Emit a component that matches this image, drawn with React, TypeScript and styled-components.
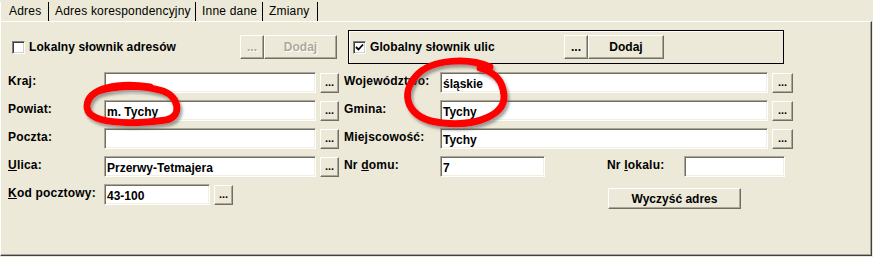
import React from "react";
import styled, { createGlobalStyle } from "styled-components";

const Global = createGlobalStyle`
  html, body {
    margin: 0;
    padding: 0;
    background: #ece9d8;
  }
  body {
    font-family: "Liberation Sans", Arial, sans-serif;
    font-size: 12px;
    color: #000;
  }
`;

const Screen = styled.div`
  position: relative;
  width: 873px;
  height: 257px;
  overflow: hidden;
  background: #ece9d8;
`;

const TabBar = styled.div`
  display: flex;
  height: 21px;
`;

const Tab = styled.div<{ $w: number; $active?: boolean }>`
  width: ${(p) => p.$w}px;
  box-sizing: border-box;
  height: 21px;
  padding: 4px 0 0 ${(p) => (p.$active ? 8 : 6)}px;
  border-right: 1px solid #000;
  border-left: ${(p) => (p.$active ? "1px solid #fff" : "none")};
  font-size: 12px;
  letter-spacing: 0.2px;
  line-height: 14px;
  white-space: nowrap;
  clip-path: inset(2px 0 0 0);
`;

const Panel = styled.div`
  width: 872px;
  height: 235px;
  box-sizing: border-box;
  border-top: 1px solid #fff;
  border-left: 1px solid #fff;
  border-right: 1px solid #404040;
  border-bottom: 1px solid #404040;
  box-shadow: inset -1px -1px 0 #aca899;
`;

const TopRow = styled.div`
  display: flex;
  align-items: center;
  height: 34px;
  margin-top: 8px;
  padding-left: 11px;
`;

const CheckLabel = styled.label`
  display: flex;
  align-items: center;
  gap: 4px;
  font-weight: bold;
  font-size: 12px;
  letter-spacing: 0.1px;
`;

const LocalBlock = styled.div`
  display: flex;
  align-items: center;
  width: 228px;
`;

const Box = styled.span`
  width: 13px;
  height: 13px;
  box-sizing: border-box;
  background: #fff;
  border-top: 1px solid #808080;
  border-left: 1px solid #808080;
  border-right: 1px solid #fff;
  border-bottom: 1px solid #fff;
  box-shadow: inset 1px 1px 0 #404040, inset -1px -1px 0 #d4d0c8;
  display: flex;
  align-items: center;
  justify-content: center;
`;

const Button = styled.button<{ $w: number; $h?: number; $disabled?: boolean }>`
  width: ${(p) => p.$w}px;
  height: ${(p) => p.$h ?? 24}px;
  box-sizing: border-box;
  padding: 0;
  margin: 0;
  background: #ece9d8;
  border-top: 1px solid #fff;
  border-left: 1px solid #fff;
  border-right: 1px solid #716f64;
  border-bottom: 1px solid #716f64;
  box-shadow: inset -1px -1px 0 #aca899;
  font-family: "Liberation Sans", Arial, sans-serif;
  font-weight: bold;
  font-size: 12px;
  color: ${(p) => (p.$disabled ? "#aca899" : "#000")};
  text-shadow: ${(p) => (p.$disabled ? "1px 1px 0 #fff" : "none")};
  line-height: 1;
`;

const GroupBox = styled.div`
  display: flex;
  align-items: center;
  width: 436px;
  height: 34px;
  box-sizing: border-box;
  margin-left: 11px;
  border: 1px solid #000;
  box-shadow: inset 1px 1px 0 #fff;
  padding-left: 4px;
`;

const GroupLabel = styled(CheckLabel)`
  width: 211px;
`;

const Rows = styled.div`
  display: flex;
  flex-direction: column;
  gap: 7px;
  margin-top: 8px;
  padding-left: 7px;
`;

const Row = styled.div`
  display: flex;
  align-items: flex-start;
  height: 21px;
`;

const Label = styled.div<{ $w: number }>`
  width: ${(p) => p.$w}px;
  flex: none;
  padding-top: 2px;
  font-weight: bold;
  font-size: 12px;
  letter-spacing: 0.2px;
  white-space: nowrap;
  overflow: hidden;
  u {
    text-decoration: underline;
    text-underline-offset: 1px;
  }
`;

const Input = styled.div<{ $w: number }>`
  width: ${(p) => p.$w}px;
  height: 21px;
  flex: none;
  box-sizing: border-box;
  background: #fff;
  border-top: 1px solid #aca899;
  border-left: 1px solid #aca899;
  border-right: 1px solid #fff;
  border-bottom: 1px solid #fff;
  box-shadow: inset 1px 1px 0 #716f64, inset -1px -1px 0 #f1efe2;
  padding: 4px 0 0 2px;
  font-weight: bold;
  font-size: 12px;
  line-height: 14px;
  white-space: nowrap;
`;

const Dots = styled(Button)`
  margin-left: 4px;
  margin-top: 1px;
  font-size: 11px;
  padding-bottom: 2px;
  flex: none;
`;

const Spacer = styled.div<{ $w: number }>`
  width: ${(p) => p.$w}px;
  flex: none;
`;

const ClearButton = styled(Button)`
  margin-top: 4px;
  flex: none;
`;

const Overlay = styled.svg`
  position: absolute;
  left: 0;
  top: 0;
  pointer-events: none;
`;

const Check = () => (
  <svg width="9" height="9" viewBox="0 0 9 9">
    <path d="M1 4 L3.5 6.5 L8 1.5" stroke="#000" strokeWidth="1.8" fill="none" />
  </svg>
);

const dots = "...";

export default function App() {
  return (
    <Screen>
      <Global />
      <TabBar>
        <Tab $w={49} $active>Adres</Tab>
        <Tab $w={147}>Adres korespondencyjny</Tab>
        <Tab $w={67}>Inne dane</Tab>
        <Tab $w={55}>Zmiany</Tab>
      </TabBar>
      <Panel>
        <TopRow>
          <LocalBlock>
            <CheckLabel>
              <Box />
              Lokalny słownik adresów
            </CheckLabel>
          </LocalBlock>
          <Button $w={24} $disabled>{dots}</Button>
          <Button $w={73} $disabled>Dodaj</Button>
          <GroupBox>
            <GroupLabel>
              <Box><Check /></Box>
              Globalny słownik ulic
            </GroupLabel>
            <Button $w={24}>{dots}</Button>
            <Button $w={76}>Dodaj</Button>
          </GroupBox>
        </TopRow>
        <Rows>
          <Row>
            <Label $w={96}>Kraj:</Label>
            <Input $w={212} />
            <Dots $w={19} $h={20}>{dots}</Dots>
            <Spacer $w={5} />
            <Label $w={96}>Województwo:</Label>
            <Input $w={328}>śląskie</Input>
            <Dots $w={21} $h={20}>{dots}</Dots>
          </Row>
          <Row>
            <Label $w={96}>Powiat:</Label>
            <Input $w={212}>m. Tychy</Input>
            <Dots $w={19} $h={20}>{dots}</Dots>
            <Spacer $w={5} />
            <Label $w={96}>Gmina:</Label>
            <Input $w={328}>Tychy</Input>
            <Dots $w={21} $h={20}>{dots}</Dots>
          </Row>
          <Row>
            <Label $w={96}>Poczta:</Label>
            <Input $w={212} />
            <Dots $w={19} $h={20}>{dots}</Dots>
            <Spacer $w={5} />
            <Label $w={96}>Miejscowość:</Label>
            <Input $w={328}>Tychy</Input>
            <Dots $w={21} $h={20}>{dots}</Dots>
          </Row>
          <Row>
            <Label $w={96}><u>U</u>lica:</Label>
            <Input $w={212}>Przerwy-Tetmajera</Input>
            <Dots $w={19} $h={20}>{dots}</Dots>
            <Spacer $w={5} />
            <Label $w={96}>Nr <u>d</u>omu:</Label>
            <Input $w={105}>7</Input>
            <Spacer $w={62} />
            <Label $w={77}>Nr <u>l</u>okalu:</Label>
            <Input $w={101} />
          </Row>
          <Row>
            <Label $w={96}><u>K</u>od pocztowy:</Label>
            <Input $w={106}>43-100</Input>
            <Dots $w={19} $h={20}>{dots}</Dots>
            <Spacer $w={375} />
            <ClearButton $w={133} $h={21}>Wyczyść adres</ClearButton>
          </Row>
        </Rows>
      </Panel>
      <Overlay width="873" height="257" viewBox="0 0 873 257">
        <defs>
          <filter id="sh" x="-20%" y="-20%" width="140%" height="140%">
            <feDropShadow dx="2" dy="3" stdDeviation="1.5" floodColor="#555" floodOpacity="0.55" />
          </filter>
        </defs>
        <path
          d="M150 87 C118 82 88 88 87 106 C86 124 130 125 166 120 C182 117 180 97 163 91 C140 84 115 86 99 91"
          stroke="#ff0000"
          strokeWidth="7"
          fill="none"
          strokeLinecap="round"
          filter="url(#sh)"
        />
        <path
          d="M490 67 C470 58 432 58 416 76 C400 94 406 119 442 123 C478 127 505 114 504 96 C503 81 496 73 480 68"
          stroke="#ff0000"
          strokeWidth="7"
          fill="none"
          strokeLinecap="round"
          filter="url(#sh)"
        />
      </Overlay>
    </Screen>
  );
}
